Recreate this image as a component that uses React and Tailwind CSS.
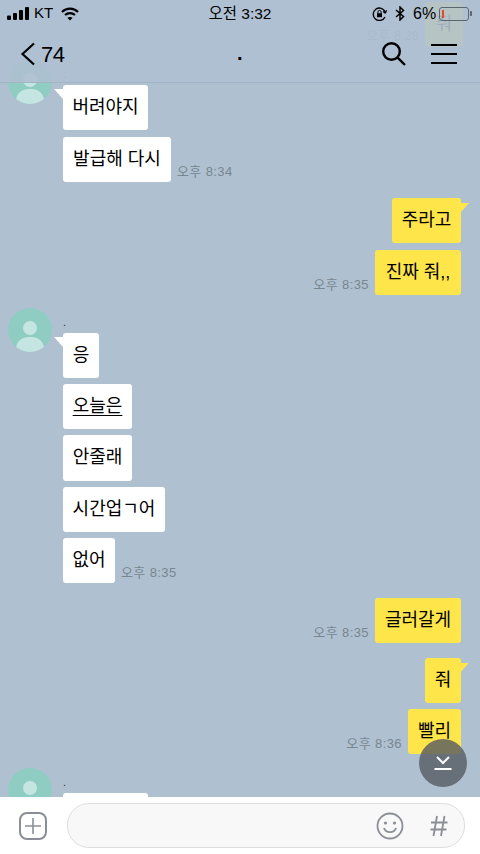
const F = { fontFamily: '"Liberation Sans","Noto Sans CJK KR",sans-serif' };

function Avatar() {
  return (
    <div className="relative w-[44px] h-[44px] rounded-full overflow-hidden bg-[#8fcdc2] shrink-0">
      <div className="absolute left-[15px] top-[13px] w-[14px] h-[14px] rounded-full bg-[#c5e5e2]" />
      <div className="absolute left-[8px] top-[29px] w-[28px] h-[24px] rounded-full bg-[#c5e5e2]" />
    </div>
  );
}

function Time({ children }) {
  return (
    <span className="text-[13px] leading-[16px] tracking-[0.4px] text-[#78868f] mb-[2px] whitespace-nowrap" style={F}>{children}</span>
  );
}

function Left({ text, tail, time, under, w, mb = "mb-[6px]" }) {
  return (
    <div className={`flex items-end gap-[6px] ${mb}`}>
      <div className={`relative h-[45.2px] ${w} flex items-center justify-center rounded-[3px] bg-white text-black text-[18px]`} style={F}>
        {tail && <span className="absolute left-[-9px] top-[4px] w-[9px] h-[10px] bg-white [clip-path:polygon(0_0,100%_0,100%_100%)]" />}
        {text && <span className={under ? "underline decoration-1 underline-offset-[3px] whitespace-nowrap" : "whitespace-nowrap"}>{text}</span>}
      </div>
      {time && <Time>{time}</Time>}
    </div>
  );
}

function Right({ text, tail, time, w, mb = "mb-[6px]" }) {
  return (
    <div className={`flex items-end justify-end gap-[6px] pr-[19px] ${mb}`}>
      {time && <Time>{time}</Time>}
      <div className={`relative h-[45.2px] ${w} flex items-center justify-center rounded-[3px] bg-[#fee54a] text-black text-[18px]`} style={F}>
        {tail && <span className="absolute right-[-8px] top-[5px] w-[8px] h-[9px] bg-[#fee54a] [clip-path:polygon(0_0,100%_0,0_100%)]" />}
        <span className="whitespace-nowrap">{text}</span>
      </div>
    </div>
  );
}

function Group({ name = ".", children, mb }) {
  return (
    <div className={`flex pl-[8px] ${mb}`}>
      <Avatar />
      <div className="ml-[11px] flex-1">
        <div className="h-[25px] pt-[6px] text-[11px] leading-[16px] text-[#333]" style={F}>{name}</div>
        {children}
      </div>
    </div>
  );
}

export default function App() {
  return (
    <div className="relative w-[480px] h-[854px] overflow-hidden bg-[#afc0d1] flex flex-col">
      {/* messages */}
      <div className="flex-1 overflow-hidden">
        <div className="h-[60px] flex justify-end items-end gap-[6px] pr-[17px]">
          <div className="flex items-start gap-[6px] h-[60px]">
            <span className="mt-[28px] text-[13px] leading-[16px] text-[#76869a]" style={F}>오후 8:28</span>
            <div className="mt-[2px] w-[38px] h-[45px] rounded-[3px] bg-[#fee54a] text-[18px] flex items-center justify-center" style={F}>줘</div>
          </div>
        </div>
        <Group mb="mb-[9.8px]">
          <Left text="버려야지" tail w="w-[85px]" mb="mb-[6.8px]" />
          <Left text="발급해 다시" time="오후 8:34" w="w-[108px]" />
        </Group>
        <Right text="주라고" tail w="w-[69px]" mb="mb-[6.8px]" />
        <Right text="진짜 줘,," time="오후 8:35" w="w-[86px]" mb="mb-[12.8px]" />
        <Group mb="mb-[8.8px]">
          <Left text="응" tail w="w-[36px]" />
          <Left text="오늘은" under w="w-[69px]" />
          <Left text="안줄래" w="w-[69px]" />
          <Left text="시간업ㄱ어" w="w-[102px]" />
          <Left text="없어" time="오후 8:35" w="w-[52px]" />
        </Group>
        <Right text="글러갈게" time="오후 8:35" w="w-[86px]" mb="mb-[14.8px]" />
        <Right text="줘" tail w="w-[36px]" mb="mb-[5.8px]" />
        <Right text="빨리" time="오후 8:36" w="w-[53px]" mb="mb-[13.8px]" />
        <Group>
          <Left tail w="w-[85px]" />
        </Group>
      </div>

      {/* translucent header */}
      <div className="absolute left-0 top-0 w-full h-[83px] bg-[#afc0d1]/90 border-b border-[#a3b5c5]">
        <div className="flex items-center h-[27px] text-black text-[15px]" style={F}>
          <svg width="22" height="13" viewBox="0 0 22 13" className="ml-[7px]" fill="#000">
            <rect x="0" y="8.5" width="4" height="4.5" rx="1" />
            <rect x="6" y="6" width="4" height="7" rx="1" />
            <rect x="12" y="3" width="4" height="10" rx="1" />
            <rect x="18" y="0" width="4" height="13" rx="1" />
          </svg>
          <span className="ml-[5px] w-[27px]">KT</span>
          <svg width="18" height="14" viewBox="0 0 18 14" fill="none" stroke="#000" strokeWidth="2.2">
            <path d="M1 5 C5.5 0.6 12.5 0.6 17 5" />
            <path d="M4 8 C6.8 5.4 11.2 5.4 14 8" />
            <path d="M9 13.5 L6.4 10.8 C8 9.6 10 9.6 11.6 10.8 Z" fill="#000" stroke="none" />
          </svg>
          <span className="ml-[128px] w-[66px] text-center text-[15.5px] whitespace-nowrap">오전 3:32</span>
          <svg width="15" height="14" viewBox="0 0 15 14" className="ml-[99px]" fill="none" stroke="#000" strokeWidth="1.4">
            <path d="M13 10 A6.2 6.2 0 1 1 13.2 5" />
            <path d="M14.6 3.4 L13.2 6 L11 4.4" strokeWidth="1.2" />
            <rect x="5" y="6.2" width="5" height="4" fill="#000" stroke="none" />
            <path d="M5.9 6.2 V5 a1.6 1.6 0 0 1 3.2 0 V6.2" strokeWidth="1" />
          </svg>
          <svg width="10" height="15" viewBox="0 0 10 15" className="ml-[8px]" fill="none" stroke="#000" strokeWidth="1.5">
            <path d="M1 4 L8.5 10.5 L5 14 V1 L8.5 4.5 L1 11" />
          </svg>
          <span className="ml-[8px] w-[26px] text-[16px] whitespace-nowrap">6%</span>
          <div className="relative ml-[0px] w-[30px] h-[14px] rounded-[3px] border border-[#5d666f]">
            <div className="absolute left-[2px] top-[2px] w-[2px] h-[8px] bg-[#f0442c]" />
            <div className="absolute right-[-3.5px] top-[3.5px] w-[2px] h-[5px] rounded-r-[1px] bg-[#5d666f]" />
          </div>
        </div>
        <div className="relative flex items-center h-[54px] text-black">
          <svg width="16" height="24" viewBox="0 0 16 24" className="ml-[20px]" fill="none" stroke="#000" strokeWidth="2.2">
            <path d="M14 1.5 L2.5 12 L14 22.5" />
          </svg>
          <span className="ml-[5px] text-[22px] tracking-[-0.5px]" style={F}>74</span>
          <span className="absolute left-[237px] top-[16px] text-[20px] font-bold leading-[20px]" style={F}>.</span>
          <svg width="26" height="26" viewBox="0 0 26 26" className="ml-auto" fill="none" stroke="#000" strokeWidth="2.4">
            <circle cx="10.5" cy="10.5" r="8.3" />
            <path d="M16.6 16.6 L24 24" />
          </svg>
          <div className="ml-[24px] mr-[23px] w-[26px] flex flex-col gap-[6.5px]">
            <div className="h-[2.4px] bg-black" />
            <div className="h-[2.4px] bg-black" />
            <div className="h-[2.4px] bg-black" />
          </div>
        </div>
      </div>

      {/* scroll-down */}
      <div className="absolute left-[419px] top-[739px] w-[48px] h-[48px] rounded-full bg-[#555a62]/80 flex items-center justify-center">
        <svg width="18" height="14" viewBox="0 0 18 14" fill="none" stroke="#fff" strokeWidth="2">
          <path d="M3 1 L9 7 L15 1" />
          <path d="M0.5 13 H17.5" />
        </svg>
      </div>

      {/* input bar */}
      <div className="relative h-[57px] shrink-0 bg-white flex items-center pl-[19px] pr-[15px]">
        <svg width="28" height="28" viewBox="0 0 28 28" fill="none" stroke="#8b8e96" className="shrink-0">
          <rect x="1" y="1" width="26" height="26" rx="7" strokeWidth="2" />
          <path d="M14 6 V22 M6 14 H22" strokeWidth="1.6" />
        </svg>
        <div className="ml-[20px] flex-1 h-[45px] rounded-[22px] bg-[#f8f8f8] border border-[#dedede] flex items-center justify-end pr-[16px]">
          <svg width="28" height="28" viewBox="0 0 28 28" fill="none" stroke="#8b8e96" strokeWidth="1.8">
            <circle cx="14" cy="14" r="12.5" />
            <circle cx="9.5" cy="11" r="1.6" fill="#8b8e96" stroke="none" />
            <circle cx="18.5" cy="11" r="1.6" fill="#8b8e96" stroke="none" />
            <path d="M8 16 C9.5 21.5 18.5 21.5 20 16" />
          </svg>
          <svg width="18" height="22" viewBox="0 0 18 22" className="ml-[26px]" fill="none" stroke="#8b8e96" strokeWidth="1.8">
            <path d="M7 1 L3.5 21 M14.5 1 L11 21 M1 7.5 H17.5 M0.5 14.5 H16.5" />
          </svg>
        </div>
      </div>
    </div>
  );
}
